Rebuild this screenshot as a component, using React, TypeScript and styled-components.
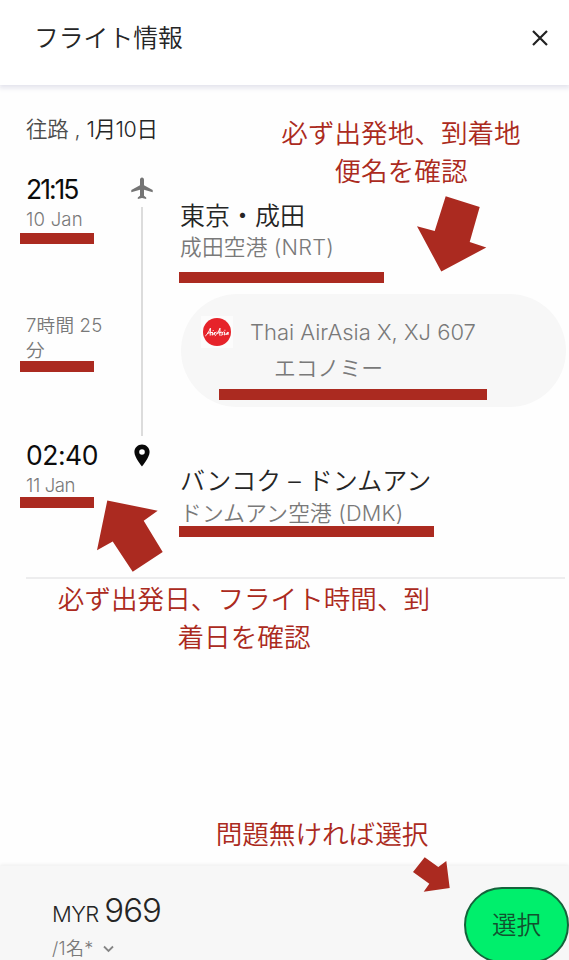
import React from "react";
import styled, { createGlobalStyle } from "styled-components";

const GlobalStyle = createGlobalStyle`
  * { box-sizing: border-box; }
  body {
    margin: 0;
    background: #fefefe;
    font-family: "Inter", "Noto Sans CJK JP", sans-serif;
    overflow: hidden;
  }
`;

const Page = styled.div`
  position: relative;
  display: flex;
  flex-direction: column;
  width: 569px;
  height: 960px;
  overflow: hidden;
  background: #fefefe;
`;

const Header = styled.header`
  display: flex;
  align-items: center;
  justify-content: space-between;
  flex: none;
  height: 85px;
  padding: 0 20px 9px 34px;
  background: #fff;
  box-shadow: 0 2px 5px 1px #e3e3ec;
`;

const CloseButton = styled.button`
  display: flex;
  padding: 0;
  border: 0;
  background: none;
`;

type TextProps = {
  $size: number;
  $line: number;
  $color?: string;
  $spacing?: number;
  $weight?: number;
};

const Text = styled.span<TextProps>`
  display: block;
  margin: 0;
  white-space: nowrap;
  font-size: ${(p) => p.$size}px;
  line-height: ${(p) => p.$line}px;
  color: ${(p) => p.$color ?? "#252525"};
  letter-spacing: ${(p) => p.$spacing ?? 0}px;
  font-weight: ${(p) => p.$weight ?? 350};
`;

const Inline = styled.span<{ $color?: string; $spacing?: number; $size?: number }>`
  color: ${(p) => p.$color ?? "inherit"};
  letter-spacing: ${(p) => (p.$spacing === undefined ? "inherit" : `${p.$spacing}px`)};
  font-size: ${(p) => (p.$size ? `${p.$size}px` : "inherit")};
`;

const Main = styled.main`
  flex: 1;
  padding: 29px 4px 0 26px;
`;

const Journey = styled.section`
  display: grid;
  grid-template-columns: 104px 24px 1fr;
  height: 435px;
  padding-top: 31px;
  border-bottom: 2px solid #ededee;
`;

const TimeColumn = styled.div`
  display: flex;
  flex-direction: column;
`;

const Slot = styled.div<{ $height: number }>`
  height: ${(p) => p.$height}px;
`;

const Track = styled.div`
  display: flex;
  flex-direction: column;
  align-items: center;
  padding-top: 2px;
`;

const TrackLine = styled.div`
  width: 2.5px;
  height: 229px;
  margin: 7px 0 8px;
  background: #dcdcdc;
`;

const Places = styled.div`
  padding: 25px 0 0 26px;
`;

const FlightPill = styled.div`
  display: grid;
  grid-template-columns: 32px 1fr;
  column-gap: 17px;
  width: 385px;
  height: 113px;
  margin: 30px 0 58px 1px;
  padding: 22px 0 0 20px;
  border-radius: 57px;
  background: #f7f7f7;
`;

const LogoTile = styled.div`
  display: grid;
  place-items: center;
  width: 32px;
  height: 32px;
  background: #fcfcfc;
`;

const CabinClass = styled.div`
  padding-left: 24px;
`;

const Footer = styled.footer`
  display: flex;
  justify-content: space-between;
  flex: none;
  height: 94px;
  padding-left: 52px;
  background: #f7f7f7;
  box-shadow: 0 -1px 4px #ececec;
`;

const Price = styled.div`
  padding-top: 23px;
`;

const PerPerson = styled.div`
  display: flex;
  align-items: center;
  gap: 9px;
  margin-top: -1px;
`;

const SelectButton = styled.button`
  flex: none;
  display: flex;
  justify-content: center;
  width: 105px;
  height: 76px;
  margin-top: 21px;
  padding: 18px 0 0;
  border: 2px solid #15633b;
  border-radius: 38px;
  background: #00ef6c;
  font-family: inherit;
`;

/* Marker annotations drawn over the page */
const Marker = styled.div<{ $x: number; $y: number; $w: number }>`
  position: absolute;
  left: ${(p) => p.$x}px;
  top: ${(p) => p.$y}px;
  width: ${(p) => p.$w}px;
  height: 11px;
  background: #ab2a20;
`;

const Note = styled.p<{ $x: number; $y: number; $w: number }>`
  position: absolute;
  left: ${(p) => p.$x}px;
  top: ${(p) => p.$y}px;
  width: ${(p) => p.$w}px;
  margin: 0;
  font-family: "Noto Sans CJK JP", sans-serif;
  font-size: 26.6px;
  font-weight: 350;
  line-height: 37.5px;
  text-align: center;
  white-space: pre;
  color: #ab2a20;
`;

const Arrows = styled.svg`
  position: absolute;
  inset: 0;
  fill: #ab2a20;
  pointer-events: none;
`;

const GREY = "#797979";

const markers = [
  { x: 20.4, y: 233, w: 73.4 },
  { x: 20.4, y: 360.7, w: 73.4 },
  { x: 20.4, y: 496.7, w: 73.4 },
  { x: 178.7, y: 271.7, w: 205.5 },
  { x: 219, y: 389, w: 267.7 },
  { x: 178.7, y: 525.5, w: 255.7 },
];

const CloseIcon = () => (
  <svg width="18" height="18" viewBox="0 0 18 18" fill="none" stroke="#222" strokeWidth="2.2">
    <path d="M2 2 16 16M16 2 2 16" />
  </svg>
);

const PlaneIcon = () => (
  <svg width="22" height="23" viewBox="0 0 22 23" fill="#747474">
    <path d="M11 .5c-1.300 0-2 1.200-2 2.600v5.100L.3 13v2.200l8.700-2.500v6L6.800 20.400V22l4.200-.9 4.200.9v-1.600l-2.200-1.700v-6l8.700 2.500v-2.200L13 8.200V3.100C13 1.700 12.300.5 11 .5z" />
  </svg>
);

const PinIcon = () => (
  <svg width="16" height="23" viewBox="0 0 16 23" fill="#080808">
    <path fillRule="evenodd" d="M8 .5C3.800.5.4 3.700.4 8c0 5.600 7.600 14.400 7.600 14.400S15.600 13.600 15.600 8C15.600 3.700 12.200.5 8 .5zM8 5.200a2.800 2.800 0 1 1 0 5.600 2.800 2.800 0 0 1 0-5.600z" />
  </svg>
);

const AirlineLogo = () => (
  <svg width="28" height="28" viewBox="0 0 28 28">
    <circle cx="14" cy="14" r="14" fill="#e6232a" />
    <g fill="none" stroke="#fff" strokeWidth="1" strokeLinecap="round" strokeLinejoin="round">
      <path d="M2.600 17.800C4.600 16.500 6.200 13 7.400 10.200L7.200 17.200M4.400 15.200 9.200 14.400M9.600 14.400 9 17.200 10.800 15.800 11.600 14.400 11.200 16.800M11.600 15.200 13.200 14.200" />
      <path d="M12.200 17.600C14.200 16 15.800 13 17 10.200L16.800 17.200M14 15.200 18.600 14.200M20.400 14 18.900 14.800 19.700 16.600 18 17.200M21.600 14.200 21.200 17 22.400 16.400M25 14.400C23.200 13.800 22.600 16.800 24 16.600L25.200 14.400 25 16.600" />
      <path d="M10.200 12.400v.1M21.900 12.200v.1" />
    </g>
  </svg>
);

const ChevronIcon = () => (
  <svg width="11" height="8" viewBox="0 0 11 8" fill="none" stroke="#858585" strokeWidth="1.8">
    <path d="M1 1.500 5.500 6 10 1.500" />
  </svg>
);

export default function App() {
  return (
    <>
      <GlobalStyle />
      <Page>
        <Header>
          <Text as="h1" $size={24.8} $line={38}>フライト情報</Text>
          <CloseButton aria-label="閉じる"><CloseIcon /></CloseButton>
        </Header>
        <Main>
          <Text $size={21.5} $line={30}>
            <Inline $color="#4d4d4d" $spacing={-0.2}>往路 ,</Inline> <Inline $spacing={-0.4}>1月10日</Inline>
          </Text>
          <Journey>
            <TimeColumn>
              <Slot $height={138}>
                <Text $size={26.5} $line={28} $color="#0c0c0c" $weight={380} $spacing={-2}>21:15</Text>
                <Text $size={18.6} $line={33} $color={GREY} $spacing={0.2}>10 Jan</Text>
              </Slot>
              <Slot $height={128}>
                <Text $size={18.6} $line={25} $color={GREY} $spacing={0.2}>7時間 25<br />分</Text>
              </Slot>
              <Text $size={26.5} $line={28} $color="#0c0c0c" $weight={380} $spacing={-0.5}>02:40</Text>
              <Text $size={18.6} $line={33} $color={GREY} $spacing={-0.4}>11 Jan</Text>
            </TimeColumn>
            <Track>
              <PlaneIcon />
              <TrackLine />
              <PinIcon />
            </Track>
            <Places>
              <Text $size={25} $line={32}>東京・成田</Text>
              <Text $size={21.7} $line={31} $color={GREY} $spacing={0.2}>成田空港 (NRT)</Text>
              <Slot $height={1} />
              <FlightPill>
                <LogoTile><AirlineLogo /></LogoTile>
                <div>
                  <Text $size={22} $line={33} $color={GREY}>Thai AirAsia X, XJ 607</Text>
                  <CabinClass>
                    <Text $size={21.8} $line={38} $color={GREY}>エコノミー</Text>
                  </CabinClass>
                </div>
              </FlightPill>
              <Text $size={25} $line={32}>バンコク – ドンムアン</Text>
              <Text $size={21.7} $line={32} $color={GREY} $spacing={0.2}>ドンムアン空港 (DMK)</Text>
            </Places>
          </Journey>
        </Main>
        <Footer>
          <Price>
            <Text $size={22} $line={42} $spacing={-0.6}>MYR <Inline $size={33} $spacing={-0.9}>969</Inline></Text>
            <PerPerson>
              <Text $size={18} $line={30} $color={GREY} $spacing={0.3}>/1名*</Text>
              <ChevronIcon />
            </PerPerson>
          </Price>
          <SelectButton>
            <Text $size={24.5} $line={36} $color="#12512f">選択</Text>
          </SelectButton>
        </Footer>

        {markers.map((m) => (
          <Marker key={`${m.x}-${m.y}`} $x={m.x} $y={m.y} $w={m.w} />
        ))}
        <Note $x={270} $y={113} $w={262}>{"必ず出発地、到着地\n便名を確認"}</Note>
        <Note $x={44} $y={579} $w={400}>{"必ず出発日、フライト時間、到\n着日を確認"}</Note>
        <Note $x={202} $y={814} $w={240}>問題無ければ選択</Note>
        <Arrows width="569" height="960" viewBox="0 0 569 960" aria-hidden="true">
          <path d="M445.700 196.300 479.700 207 469.700 242 486.300 247.500 441.300 271.500 417 226.300 434.700 231z" />
          <path d="M107.300 500.500 157.700 510.700 143.700 520.700 162.700 552 132.700 571.700 112.700 541.500 97 550.300z" />
          <path d="M424.700 857.300 438.300 867 446.300 861 449.700 888 423.700 891.700 429.300 883.700 413 872z" />
        </Arrows>
      </Page>
    </>
  );
}
